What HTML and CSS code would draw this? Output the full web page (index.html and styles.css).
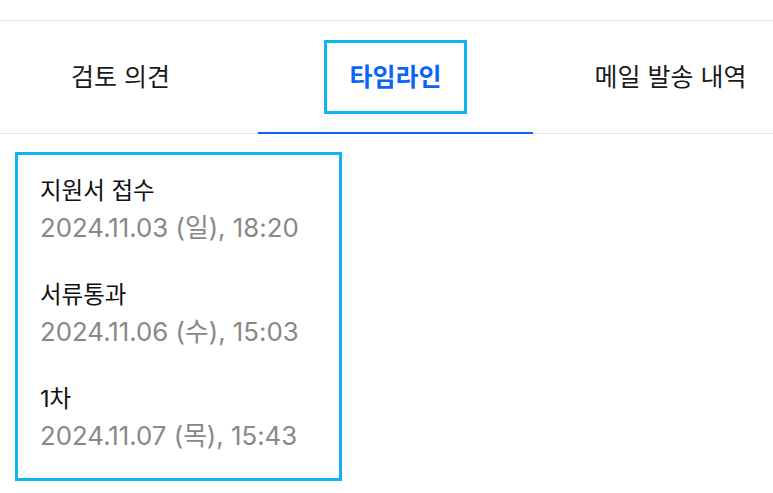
FILE: index.html
```html
<!DOCTYPE html>
<html lang="ko">
<head>
    <meta charset="UTF-8">
    <meta name="viewport" content="width=device-width, initial-scale=1.0">
    <title>지원자 상세</title>
    <link rel="stylesheet" href="styles.css">
</head>
<body>
    <div class="page">
        <nav class="tabs">
            <div class="tab"><span class="tab-label">검토 의견</span></div>
            <div class="tab active"><span class="tab-label focus">타임라인</span></div>
            <div class="tab"><span class="tab-label">메일 발송 내역</span></div>
        </nav>

        <div class="timeline">
            <div class="item">
                <div class="title">지원서 접수</div>
                <div class="date">2024.11.03 (일), 18:20</div>
            </div>
            <div class="item">
                <div class="title">서류통과</div>
                <div class="date">2024.11.06 (수), 15:03</div>
            </div>
            <div class="item">
                <div class="title">1차</div>
                <div class="date">2024.11.07 (목), 15:43</div>
            </div>
        </div>
    </div>
</body>
</html>
```

FILE: styles.css
```css
body { margin: 0; font-family: Inter, "Noto Sans CJK KR", sans-serif; background: #fff; color: #111; overflow: hidden; }
.page { padding-top: 20px; }

.tabs { display: flex; border-top: 1px solid #e4e4e4; border-bottom: 1px solid #e4e4e4; margin-left: -17px; width: 825px; height: 112px; }
.tab { width: 275px; flex: none; display: flex; align-items: center; justify-content: center; font-size: 25px; font-weight: 400; color: #1a1a1a; position: relative; }
.tab.active { color: #0a64f5; font-weight: 600; }
.tab.active::after { content: ""; position: absolute; left: 0; right: 0; bottom: -1px; height: 2px; background: #0a64f5; }
.tab-label { line-height: 32px; padding: 18px 22px; border: 3px solid transparent; }
.tab-label.focus { border-color: #10b4ee; }

.timeline { margin: 18px 0 0 15px; width: 299px; border: 3px solid #10b4ee; padding: 19px 0 22px 22px; }
.item + .item { margin-top: 30px; }
.title { font-size: 23.5px; line-height: 34px; color: #111; }
.date { font-size: 25.8px; line-height: 40px; color: #888; }
```
